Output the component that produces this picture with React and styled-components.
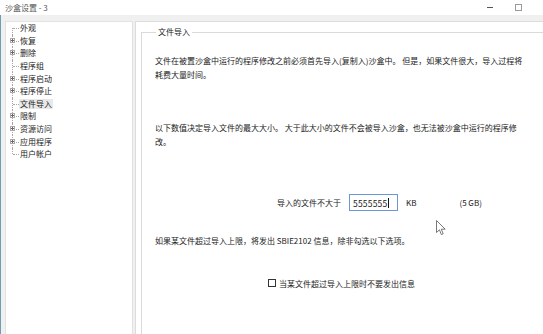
import React from "react";
import styled, { createGlobalStyle } from "styled-components";

const GlobalStyle = createGlobalStyle`
  html, body {
    margin: 0;
    padding: 0;
    background: #ffffff;
  }
  body {
    font-family: "Noto Sans CJK SC", "Noto Sans", sans-serif;
  }
`;

const treeItems = [
  { label: "外观" },
  { label: "恢复", expandable: true },
  { label: "删除", expandable: true },
  { label: "程序组" },
  { label: "程序启动", expandable: true },
  { label: "程序停止", expandable: true },
  { label: "文件导入", selected: true },
  { label: "限制", expandable: true },
  { label: "资源访问", expandable: true },
  { label: "应用程序", expandable: true },
  { label: "用户帐户" },
];

const App = () => {
  return (
    <Window>
      <GlobalStyle />
      <TitleBar>
        <Title>沙盒设置 - 3</Title>
        <WindowButtons>
          <MinButton />
          <MaxButton />
        </WindowButtons>
      </TitleBar>

      <Body>
        <TreePanel>
          {treeItems.map((item, i) => (
            <TreeRow key={item.label}>
              <Connector first={i === 0} last={i === treeItems.length - 1}>
                {item.expandable && <PlusBox />}
              </Connector>
              <TreeLabel selected={item.selected}>{item.label}</TreeLabel>
            </TreeRow>
          ))}
        </TreePanel>

        <ContentPanel>
          <GroupBox>
            <Legend>文件导入</Legend>
            <Paragraph top={16}>
              文件在被置沙盒中运行的程序修改之前必须首先导入(复制入)沙盒中。 但是，如果文件很大，导入过程将
              <br />
              耗费大量时间。
            </Paragraph>
            <Paragraph top={39}>
              以下数值决定导入文件的最大大小。 大于此大小的文件不会被导入沙盒，也无法被沙盒中运行的程序修
              <br />
              改。
            </Paragraph>

            <LimitRow>
              <span>导入的文件不大于</span>
              <TextBox>
                5555555
                <Caret />
              </TextBox>
              <Unit>KB</Unit>
              <span>(5 GB)</span>
            </LimitRow>

            <Paragraph top={23}>
              如果某文件超过导入上限，将发出 SBIE2102 信息，除非勾选以下选项。
            </Paragraph>

            <CheckRow>
              <CheckBox />
              <span>当某文件超过导入上限时不要发出信息</span>
            </CheckRow>
          </GroupBox>
        </ContentPanel>
      </Body>

      <Cursor width="11" height="16" viewBox="0 0 11 16">
        <path
          d="M0.5 0.5 L0.5 12.5 L3.4 9.8 L5.4 14.6 L7.2 13.8 L5.3 9.2 L9.2 9.2 Z"
          fill="#ffffff"
          stroke="#6a6a6a"
          strokeWidth="0.9"
          strokeLinejoin="round"
        />
      </Cursor>
    </Window>
  );
};

export default App;

const Window = styled.div`
  position: relative;
  width: 543px;
  height: 334px;
  overflow: hidden;
  display: flex;
  flex-direction: column;
  color: #222;
  font-size: 8px;
`;

const TitleBar = styled.div`
  height: 15px;
  flex: 0 0 15px;
  display: flex;
  align-items: center;
  justify-content: space-between;
  background: #ffffff;
  padding-left: 5px;
`;

const Title = styled.span`
  color: #555;
  font-size: 8px;
  line-height: 12px;
`;

const WindowButtons = styled.div`
  display: flex;
  align-items: center;
  gap: 22px;
  margin-right: 21px;
`;

const MinButton = styled.span`
  width: 6px;
  height: 1px;
  background: #555;
`;

const MaxButton = styled.span`
  width: 5px;
  height: 5px;
  border: 1px solid #9a9a9a;
`;

const Body = styled.div`
  flex: 1;
  display: flex;
  gap: 2px;
  padding: 6px 0 0 4px;
  background: #f0f0f0;
  border-left: 1px solid #6f9db3;
  overflow: hidden;
`;

const TreePanel = styled.div`
  width: 128px;
  flex: 0 0 128px;
  box-sizing: border-box;
  background: #ffffff;
  border: 1px solid #e2e2e2;
  border-bottom: none;
  padding-top: 0;
`;

const TreeRow = styled.div`
  display: flex;
  align-items: center;
  height: 12.6px;
`;

const Connector = styled.span`
  position: relative;
  width: 13px;
  height: 100%;
  flex: 0 0 13px;

  &::before {
    content: "";
    position: absolute;
    left: 6px;
    top: ${(p) => (p.first ? "50%" : "0")};
    bottom: ${(p) => (p.last ? "50%" : "0")};
    border-left: 1px dotted #a8a8a8;
  }

  &::after {
    content: "";
    position: absolute;
    left: 7px;
    right: 0;
    top: 50%;
    border-top: 1px dotted #a8a8a8;
  }
`;

const PlusBox = styled.span`
  position: absolute;
  left: 4px;
  top: 50%;
  width: 5px;
  height: 5px;
  margin-top: -3px;
  box-sizing: border-box;
  border: 1px solid #a8a8a8;
  background: #ffffff;
  z-index: 1;

  &::before {
    content: "";
    position: absolute;
    left: 0;
    right: 0;
    top: 1px;
    height: 1px;
    background: #666;
  }
  &::after {
    content: "";
    position: absolute;
    top: 0;
    bottom: 0;
    left: 1px;
    width: 1px;
    background: #666;
  }
`;

const TreeLabel = styled.span`
  padding: 0 1px;
  line-height: 10px;
  color: #222;
  background: ${(p) => (p.selected ? "#e9e9e9" : "transparent")};
`;

const ContentPanel = styled.div`
  flex: 1;
  margin-right: -20px;
  background: #ffffff;
  border: 1px solid #dcdcdc;
  border-bottom: none;
  display: flex;
  flex-direction: column;
`;

const GroupBox = styled.fieldset`
  margin: 4px -20px 0 5px;
  padding: 0 0 0 13px;
  min-width: 0;
  height: 400px;
  border: 1px solid #dadada;
  border-right: none;
  border-bottom: none;
`;

const Legend = styled.legend`
  margin-left: 1px;
  padding: 0 2px;
  font-size: 8px;
  line-height: 12px;
  color: #222;
`;

const Paragraph = styled.p`
  margin: ${(p) => p.top}px 0 0 0;
  font-size: 8px;
  line-height: 14px;
  white-space: nowrap;
  color: #222;
`;

const LimitRow = styled.div`
  display: flex;
  align-items: center;
  height: 17px;
  margin: 45px 0 0 122px;
  white-space: nowrap;

  & > span:last-child {
    margin-left: 43px;
  }
`;

const TextBox = styled.div`
  display: flex;
  align-items: center;
  box-sizing: border-box;
  width: 49px;
  height: 17px;
  margin-left: 8px;
  padding-left: 3px;
  border: 1px solid #6b98d2;
  font-size: 8.5px;
  letter-spacing: 0.2px;
`;

const Caret = styled.span`
  width: 1px;
  height: 10px;
  margin-left: 1px;
  background: #111;
`;

const Unit = styled.span`
  margin-left: 8px;
`;

const CheckRow = styled.div`
  display: flex;
  align-items: center;
  gap: 3px;
  height: 12px;
  margin: 29px 0 0 113px;
  white-space: nowrap;
`;

const CheckBox = styled.span`
  width: 8px;
  height: 8px;
  box-sizing: border-box;
  border: 1px solid #333;
  background: #fff;
`;

const Cursor = styled.svg`
  position: absolute;
  left: 436px;
  top: 220px;
`;
